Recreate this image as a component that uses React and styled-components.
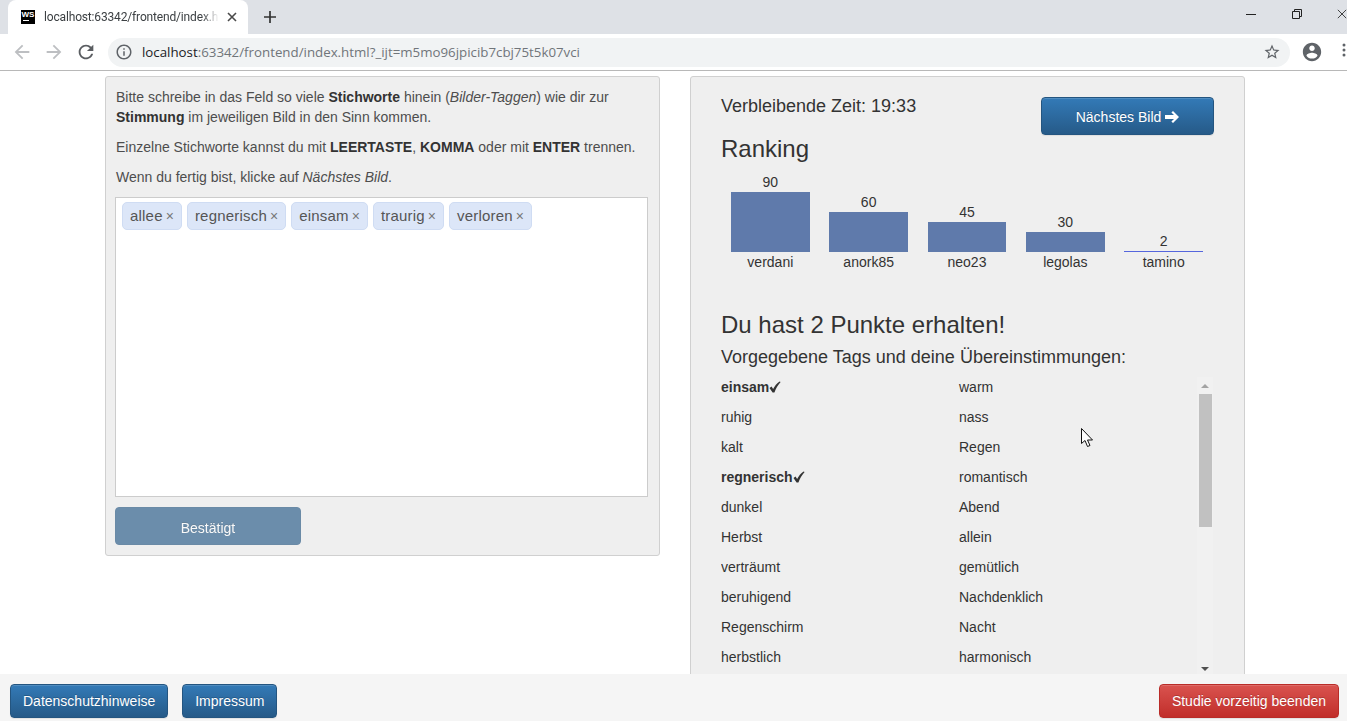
import React from "react";
import styled, { createGlobalStyle } from "styled-components";

const GlobalStyle = createGlobalStyle`
  html, body {
    margin: 0;
    height: 100%;
    overflow: hidden;
    background: #fff;
    font-family: "Liberation Sans", Arial, sans-serif;
    font-size: 14px;
    line-height: 20px;
    color: #333;
  }
`;

// Browser chrome
const TabStrip = styled.div`
  display: flex;
  height: 34px;
  padding-left: 8px;
  background: #dee1e6;
  overflow: hidden;
`;

const Tab = styled.div`
  display: flex;
  align-items: center;
  width: 240px;
  height: 34px;
  padding-left: 13px;
  box-sizing: border-box;
  background: #fff;
  border-radius: 8px 8px 0 0;
`;

const Favicon = styled.div`
  width: 14px;
  height: 14px;
  margin-right: 9px;
  background: #000;
  color: #fff;
  font-size: 8px;
  font-weight: bold;
  line-height: 10px;
  text-align: center;
  flex: none;
  &::after {
    content: "";
    display: block;
    width: 6px;
    height: 1px;
    margin: 0 0 0 2px;
    background: #fff;
  }
`;

const TabTitle = styled.span`
  width: 175px;
  white-space: nowrap;
  font-family: "Roboto", sans-serif;
  font-size: 12px;
  letter-spacing: -0.16px;
  color: #3c4043;
  -webkit-mask-image: linear-gradient(90deg, #000 90%, transparent);
  mask-image: linear-gradient(90deg, #000 90%, transparent);
`;

const TabClose = styled.svg`
  width: 10px;
  height: 10px;
  margin-left: 8px;
  flex: none;
`;

const NewTab = styled.svg`
  width: 12px;
  height: 12px;
  margin: 11px 0 0 16px;
  flex: none;
`;

const WindowControls = styled.div`
  display: flex;
  margin-left: auto;
`;

const WindowButton = styled.div`
  display: flex;
  align-items: center;
  justify-content: ${(p) => (p.$edge ? "flex-start" : "center")};
  width: ${(p) => (p.$edge ? "27px" : "46px")};
  height: 28px;
  padding-left: ${(p) => (p.$edge ? "17px" : "0")};
  box-sizing: border-box;
  overflow: hidden;
`;

const Toolbar = styled.div`
  display: flex;
  align-items: center;
  height: 36px;
  padding-left: 6px;
  background: #fff;
  border-bottom: 1px solid #b8b8b8;
  overflow: hidden;
`;

const ToolButton = styled.div`
  display: flex;
  align-items: center;
  justify-content: center;
  width: 32px;
  height: 32px;
  flex: none;
`;

const MenuDots = styled.div`
  width: 19px;
  flex: none;
`;

const Omnibox = styled.div`
  display: flex;
  align-items: center;
  flex: 1;
  height: 29px;
  margin: 0 6px;
  padding: 0 9px 0 7px;
  background: #f1f3f4;
  border-radius: 15px;
`;

const UrlText = styled.span`
  margin-left: 9px;
  font-family: "Open Sans", sans-serif;
  font-size: 13.3px;
  white-space: nowrap;
  color: #70757a;
  b {
    font-weight: normal;
    color: #202124;
  }
`;

const StarIcon = styled.svg`
  margin-left: auto;
`;

// Page
const Columns = styled.main`
  display: grid;
  grid-template-columns: 555px 555px;
  column-gap: 30px;
  align-items: start;
  padding: 5px 0 0 105px;
`;

const Well = styled.section`
  box-sizing: border-box;
  background: #efefef;
  border: 1px solid #d0d0d0;
  border-radius: 3px;
`;

const LeftWell = styled(Well)`
  height: 480px;
  padding: 10px;
`;

const RightWell = styled(Well)`
  height: 645px;
  padding: 0 30px;
`;

const Hint = styled.p`
  margin: 0 0 10px;
  color: #4d4d4d;
  b {
    color: #333;
  }
`;

const TagBox = styled.div`
  display: flex;
  align-items: flex-start;
  gap: 5px;
  height: 300px;
  box-sizing: border-box;
  width: 533px;
  margin-left: -1px;
  padding: 4px 6px;
  background: #fff;
  border: 1px solid #ccc;
`;

const Tag = styled.span`
  display: flex;
  align-items: center;
  height: 28px;
  box-sizing: border-box;
  padding: 0 7px;
  background: #dce6f8;
  border: 1px solid #cfdcf3;
  border-radius: 5px;
  font-size: 15px;
  letter-spacing: 0.2px;
  color: #555;
  i {
    margin-left: 3px;
    font-style: normal;
    font-size: 14px;
    letter-spacing: 0;
    color: #777;
  }
`;

const Button = styled.button`
  height: 34px;
  padding: 0 12px;
  box-sizing: border-box;
  font-family: inherit;
  font-size: 14px;
  color: #fff;
  text-shadow: 0 -1px 0 rgba(0, 0, 0, 0.2);
  border-radius: 4px;
  border: 1px solid ${(p) => (p.$danger ? "#b92c28" : "#245580")};
  background: ${(p) =>
    p.$danger
      ? "linear-gradient(#d9534f, #c12e2a)"
      : "linear-gradient(#337ab7, #265a88)"};
  box-shadow: inset 0 1px 0 rgba(255, 255, 255, 0.15), 0 1px 1px rgba(0, 0, 0, 0.075);
`;

const ConfirmButton = styled(Button)`
  display: block;
  width: 186px;
  height: 38px;
  margin: 10px 0 0 -1px;
  padding-top: 3px;
  background: #265a88;
  box-shadow: none;
  opacity: 0.65;
`;

const ImprintButton = styled(Button)`
  width: 95px;
  padding: 0;
`;

const TopRow = styled.div`
  display: flex;
  justify-content: space-between;
  align-items: flex-start;
`;

const Timer = styled.div`
  margin-top: 19px;
  font-size: 18px;
`;

const NextButton = styled(Button)`
  display: flex;
  align-items: center;
  justify-content: center;
  gap: 4px;
  width: 173px;
  height: 38px;
  margin-top: 20px;
  padding-top: 2px;
`;

const Heading = styled.h3`
  margin: ${(p) => p.$top} 0 0;
  font-size: 24px;
  font-weight: normal;
  line-height: 26px;
`;

const SubHeading = styled.h4`
  margin: 9px 0 0;
  font-size: 18px;
  font-weight: normal;
  line-height: 20px;
`;

const Chart = styled.div`
  display: grid;
  grid-template-columns: repeat(5, 1fr);
  column-gap: 19.7px;
  align-items: end;
  height: 100px;
  margin: 10px 11px 0 10px;
  text-align: center;
`;

const BarColumn = styled.div`
  display: flex;
  flex-direction: column;
`;

const Bar = styled.div`
  height: ${(p) => p.$h}px;
  background: ${(p) => (p.$h > 1 ? "#5f7aab" : "#5566dd")};
`;

const TagList = styled.div`
  display: flex;
  height: 300px;
  margin-top: 10px;
  overflow: hidden;
`;

const TagRows = styled.div`
  display: grid;
  grid-template-columns: 238px 1fr;
  grid-auto-rows: 30px;
  flex: 1;
  align-content: start;
`;

const TagCell = styled.div`
  font-weight: ${(p) => (p.$hit ? "bold" : "normal")};
`;

const ScrollTrack = styled.div`
  display: flex;
  flex-direction: column;
  align-items: center;
  width: 16px;
  margin-right: 1px;
  background: #f1f1f1;
`;

const ScrollArrow = styled.div`
  display: flex;
  align-items: center;
  justify-content: center;
  height: 17px;
  flex: none;
  &::before {
    content: "";
    border-left: 4px solid transparent;
    border-right: 4px solid transparent;
    ${(p) => (p.$down ? "border-top: 4px solid #505050;" : "border-bottom: 4px solid #a3a3a3;")}
  }
`;

const ScrollThumb = styled.div`
  width: 13px;
  height: 133px;
  background: #c1c1c1;
  flex: none;
`;

const ScrollSpace = styled.div`
  flex: 1;
`;

const Footer = styled.footer`
  position: fixed;
  left: 0;
  right: 0;
  bottom: 0;
  display: flex;
  gap: 14px;
  height: 47px;
  padding: 10px 8px 0 10px;
  box-sizing: border-box;
  background: #f5f5f5;
`;

const FooterEnd = styled(Button)`
  margin-left: auto;
`;

const Pointer = styled.svg`
  position: fixed;
  left: 1081px;
  top: 428px;
`;

const ranking = [
  { name: "verdani", score: 90, height: 60 },
  { name: "anork85", score: 60, height: 40 },
  { name: "neo23", score: 45, height: 30 },
  { name: "legolas", score: 30, height: 20 },
  { name: "tamino", score: 2, height: 1 },
];

const tagRows = [
  ["einsam", true, "warm"],
  ["ruhig", false, "nass"],
  ["kalt", false, "Regen"],
  ["regnerisch", true, "romantisch"],
  ["dunkel", false, "Abend"],
  ["Herbst", false, "allein"],
  ["verträumt", false, "gemütlich"],
  ["beruhigend", false, "Nachdenklich"],
  ["Regenschirm", false, "Nacht"],
  ["herbstlich", false, "harmonisch"],
];

const myTags = ["allee", "regnerisch", "einsam", "traurig", "verloren"];

const Icon = ({ d, size = 24, fill = "#5f6368" }) => (
  <svg width={size} height={size} viewBox="0 0 24 24" fill={fill}>
    <path d={d} />
  </svg>
);

const CheckMark = () => (
  <svg width="12" height="12" viewBox="0 0 12 12" fill="#333" style={{ verticalAlign: "-1px" }}>
    <path d="M.5 7L2.6 5.6l1.5 2.4C5.5 5 8 2.2 10.6.4l1 .6C8.8 4 6.8 8 5.4 11.6H3.6z" />
  </svg>
);

const App = () => {
  return (
    <>
      <GlobalStyle />
      <TabStrip>
        <Tab>
          <Favicon>WS</Favicon>
          <TabTitle>localhost:63342/frontend/index.h</TabTitle>
          <TabClose viewBox="0 0 10 10" stroke="#4a4a4a" strokeWidth="1.6">
            <path d="M1 1l8 8M9 1l-8 8" />
          </TabClose>
        </Tab>
        <NewTab viewBox="0 0 12 12" stroke="#333" strokeWidth="1.7">
          <path d="M6 0v12M0 6h12" />
        </NewTab>
        <WindowControls>
          <WindowButton>
            <svg width="10" height="10" viewBox="0 0 10 10" stroke="#222">
              <path d="M0 5.5h10" />
            </svg>
          </WindowButton>
          <WindowButton>
            <svg width="10" height="10" viewBox="0 0 10 10" fill="none" stroke="#222">
              <path d="M.5 2.5h7v7h-7zM2.5 2.5v-2h7v7h-2" />
            </svg>
          </WindowButton>
          <WindowButton $edge>
            <svg width="12" height="12" viewBox="0 0 12 12" stroke="#222">
              <path d="M1 1l10 10M11 1L1 11" />
            </svg>
          </WindowButton>
        </WindowControls>
      </TabStrip>
      <Toolbar>
        <ToolButton>
          <Icon size={22} fill="#bdbfc2" d="M20 11H7.83l5.59-5.59L12 4l-8 8 8 8 1.41-1.41L7.83 13H20v-2z" />
        </ToolButton>
        <ToolButton>
          <Icon size={22} fill="#bdbfc2" d="M12 4l-1.41 1.41L16.17 11H4v2h12.17l-5.58 5.59L12 20l8-8z" />
        </ToolButton>
        <ToolButton>
          <Icon size={22} fill="#5a5d61" d="M17.65 6.35C16.2 4.9 14.21 4 12 4c-4.42 0-7.99 3.58-7.99 8s3.57 8 7.99 8c3.73 0 6.84-2.55 7.73-6h-2.08c-.82 2.33-3.04 4-5.65 4-3.31 0-6-2.69-6-6s2.69-6 6-6c1.66 0 3.14.69 4.22 1.78L13 11h7V4l-2.35 2.35z" />
        </ToolButton>
        <Omnibox>
          <Icon size={18} d="M11 7h2v2h-2zm0 4h2v6h-2zm1-9C6.48 2 2 6.48 2 12s4.48 10 10 10 10-4.48 10-10S17.52 2 12 2zm0 18c-4.41 0-8-3.59-8-8s3.59-8 8-8 8 3.59 8 8-3.59 8-8 8z" />
          <UrlText>
            <b>localhost</b>:63342/frontend/index.html?_ijt=m5mo96jpicib7cbj75t5k07vci
          </UrlText>
          <StarIcon width="18" height="18" viewBox="0 0 24 24" fill="#5f6368">
            <path d="M22 9.24l-7.19-.62L12 2 9.19 8.63 2 9.24l5.46 4.73L5.82 21 12 17.27 18.18 21l-1.63-7.03L22 9.24zM12 15.4l-3.76 2.27 1-4.28-3.32-2.88 4.38-.38L12 6.1l1.71 4.04 4.38.38-3.32 2.88 1 4.28L12 15.4z" />
          </StarIcon>
        </Omnibox>
        <ToolButton>
          <Icon size={22} d="M12 2C6.48 2 2 6.48 2 12s4.48 10 10 10 10-4.48 10-10S17.52 2 12 2zm0 3c1.66 0 3 1.34 3 3s-1.34 3-3 3-3-1.34-3-3 1.34-3 3-3zm0 14.2c-2.5 0-4.71-1.28-6-3.22.03-1.99 4-3.08 6-3.08 1.99 0 5.97 1.09 6 3.08-1.29 1.94-3.5 3.22-6 3.22z" />
        </ToolButton>
        <MenuDots>
          <svg width="19" height="16" viewBox="0 0 19 16" fill="#5f6368">
            <circle cx="16" cy="3" r="1.5" />
            <circle cx="16" cy="8" r="1.5" />
            <circle cx="16" cy="13" r="1.5" />
          </svg>
        </MenuDots>
      </Toolbar>

      <Columns>
        <LeftWell>
          <Hint>
            Bitte schreibe in das Feld so viele <b>Stichworte</b> hinein (<i>Bilder-Taggen</i>) wie dir zur{" "}
            <b>Stimmung</b> im jeweiligen Bild in den Sinn kommen.
          </Hint>
          <Hint>
            Einzelne Stichworte kannst du mit <b>LEERTASTE</b>, <b>KOMMA</b> oder mit <b>ENTER</b> trennen.
          </Hint>
          <Hint>
            Wenn du fertig bist, klicke auf <i>Nächstes Bild</i>.
          </Hint>
          <TagBox>
            {myTags.map((tag) => (
              <Tag key={tag}>
                {tag}
                <i>×</i>
              </Tag>
            ))}
          </TagBox>
          <ConfirmButton>Bestätigt</ConfirmButton>
        </LeftWell>

        <RightWell>
          <TopRow>
            <Timer>Verbleibende Zeit: 19:33</Timer>
            <NextButton>
              Nächstes Bild
              <svg width="14" height="12" viewBox="0 0 14 12" fill="#fff">
                <path d="M8 0l6 6-6 6-1.6-1.6L9 8H0V4h9L6.4 1.6z" />
              </svg>
            </NextButton>
          </TopRow>
          <Heading $top="1px">Ranking</Heading>
          <Chart>
            {ranking.map((r) => (
              <BarColumn key={r.name}>
                <span>{r.score}</span>
                <Bar $h={r.height} />
                <span>{r.name}</span>
              </BarColumn>
            ))}
          </Chart>
          <Heading $top="40px">Du hast 2 Punkte erhalten!</Heading>
          <SubHeading>Vorgegebene Tags und deine Übereinstimmungen:</SubHeading>
          <TagList>
            <TagRows>
              {tagRows.map(([left, hit, right]) => (
                <React.Fragment key={left}>
                  <TagCell $hit={hit}>
                    {left}
                    {hit && <CheckMark />}
                  </TagCell>
                  <TagCell>{right}</TagCell>
                </React.Fragment>
              ))}
            </TagRows>
            <ScrollTrack>
              <ScrollArrow />
              <ScrollThumb />
              <ScrollSpace />
              <ScrollArrow $down />
            </ScrollTrack>
          </TagList>
        </RightWell>
      </Columns>

      <Footer>
        <Button>Datenschutzhinweise</Button>
        <ImprintButton>Impressum</ImprintButton>
        <FooterEnd $danger>Studie vorzeitig beenden</FooterEnd>
      </Footer>

      <Pointer width="12" height="20" viewBox="0 0 12 20" fill="#fff" stroke="#111" strokeWidth="1">
        <path d="M.5.5v15l3.5-3 2.5 6 2.5-1-2.5-5.5h5z" />
      </Pointer>
    </>
  );
};

export default App;
